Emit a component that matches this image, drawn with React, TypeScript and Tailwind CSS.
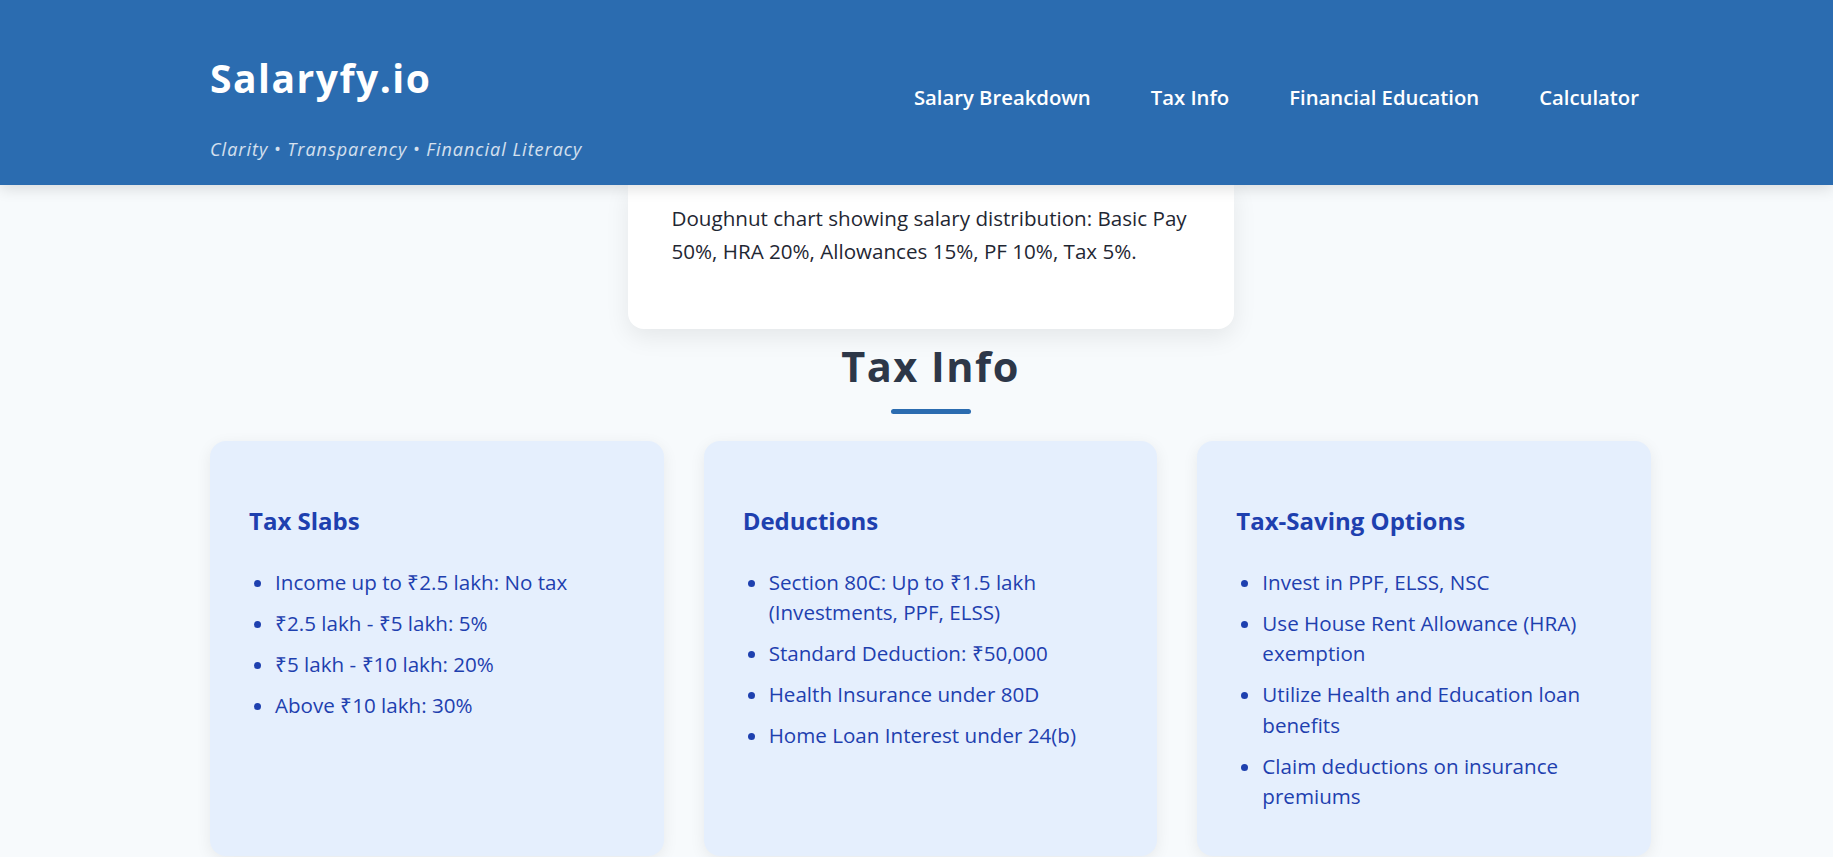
import React from 'react';

const navLinks = ['Salary Breakdown', 'Tax Info', 'Financial Education', 'Calculator'];

const taxCards = [
  {
    title: 'Tax Slabs',
    items: [
      'Income up to ₹2.5 lakh: No tax',
      '₹2.5 lakh - ₹5 lakh: 5%',
      '₹5 lakh - ₹10 lakh: 20%',
      'Above ₹10 lakh: 30%',
    ],
  },
  {
    title: 'Deductions',
    items: [
      'Section 80C: Up to ₹1.5 lakh (Investments, PPF, ELSS)',
      'Standard Deduction: ₹50,000',
      'Health Insurance under 80D',
      'Home Loan Interest under 24(b)',
    ],
  },
  {
    title: 'Tax-Saving Options',
    items: [
      'Invest in PPF, ELSS, NSC',
      'Use House Rent Allowance (HRA) exemption',
      'Utilize Health and Education loan benefits',
      'Claim deductions on insurance premiums',
    ],
  },
];

export default function App() {
  return (
    <div className="min-h-screen bg-[#f7fafc] font-['Open_Sans',sans-serif]">
      {/* Header */}
      <header className="relative z-10 h-[185px] bg-[#2b6cb0] shadow-[0_4px_14px_rgba(0,0,0,0.12)]">
        <div className="ml-[210px] w-[1441px] flex justify-between items-start">
          <div className="pt-[58px]">
            <h1 className="text-[39px] leading-none font-bold tracking-[1.5px] text-white">Salaryfy.io</h1>
            <p className="mt-[43px] text-[18px] leading-none italic tracking-[1px] text-white/80">
              Clarity • Transparency • Financial Literacy
            </p>
          </div>
          <nav className="pt-[87px] mr-[12px] flex gap-[60px]">
            {navLinks.map((link) => (
              <a key={link} href="#" className="text-[20.3px] leading-none font-semibold text-white">
                {link}
              </a>
            ))}
          </nav>
        </div>
      </header>

      <main className="ml-[210px] w-[1441px] pb-10">
        {/* Salary chart card (scrolled under header) */}
        <div className="mx-auto w-[606px] bg-white rounded-b-2xl pt-[17px] pb-[61px] pl-[44px] pr-[30px] shadow-[0_8px_24px_rgba(0,0,0,0.08)]">
          <p className="text-[20.6px] leading-[33px] text-[#1f2733]">
            Doughnut chart showing salary distribution: Basic Pay 50%, HRA 20%, Allowances 15%, PF 10%, Tax 5%.
          </p>
        </div>

        {/* Tax Info */}
        <section className="mt-[17px]">
          <h2 className="text-center text-[41.5px] leading-none font-bold tracking-[1.5px] text-[#2d3748]">Tax Info</h2>
          <div className="mx-auto mt-[21px] h-[5px] w-[80px] rounded-full bg-[#2b6cb0]" />

          <div className="mt-[27px] grid grid-cols-3 gap-[40px]">
            {taxCards.map((card) => (
              <div
                key={card.title}
                className="rounded-2xl bg-[#e5effd] pt-[68px] pb-[34px] pl-[39px] pr-[40px] shadow-[0_4px_16px_rgba(0,0,0,0.07)]"
              >
                <h3 className="text-[24px] leading-none font-bold text-[#1e40af]">{card.title}</h3>
                <ul className="mt-[34px] pl-[26px] list-disc text-[20.6px] leading-[30.5px] text-[#1e40af]">
                  {card.items.map((item) => (
                    <li key={item} className="mb-[10.5px]">
                      {item}
                    </li>
                  ))}
                </ul>
              </div>
            ))}
          </div>
        </section>
      </main>
    </div>
  );
}
